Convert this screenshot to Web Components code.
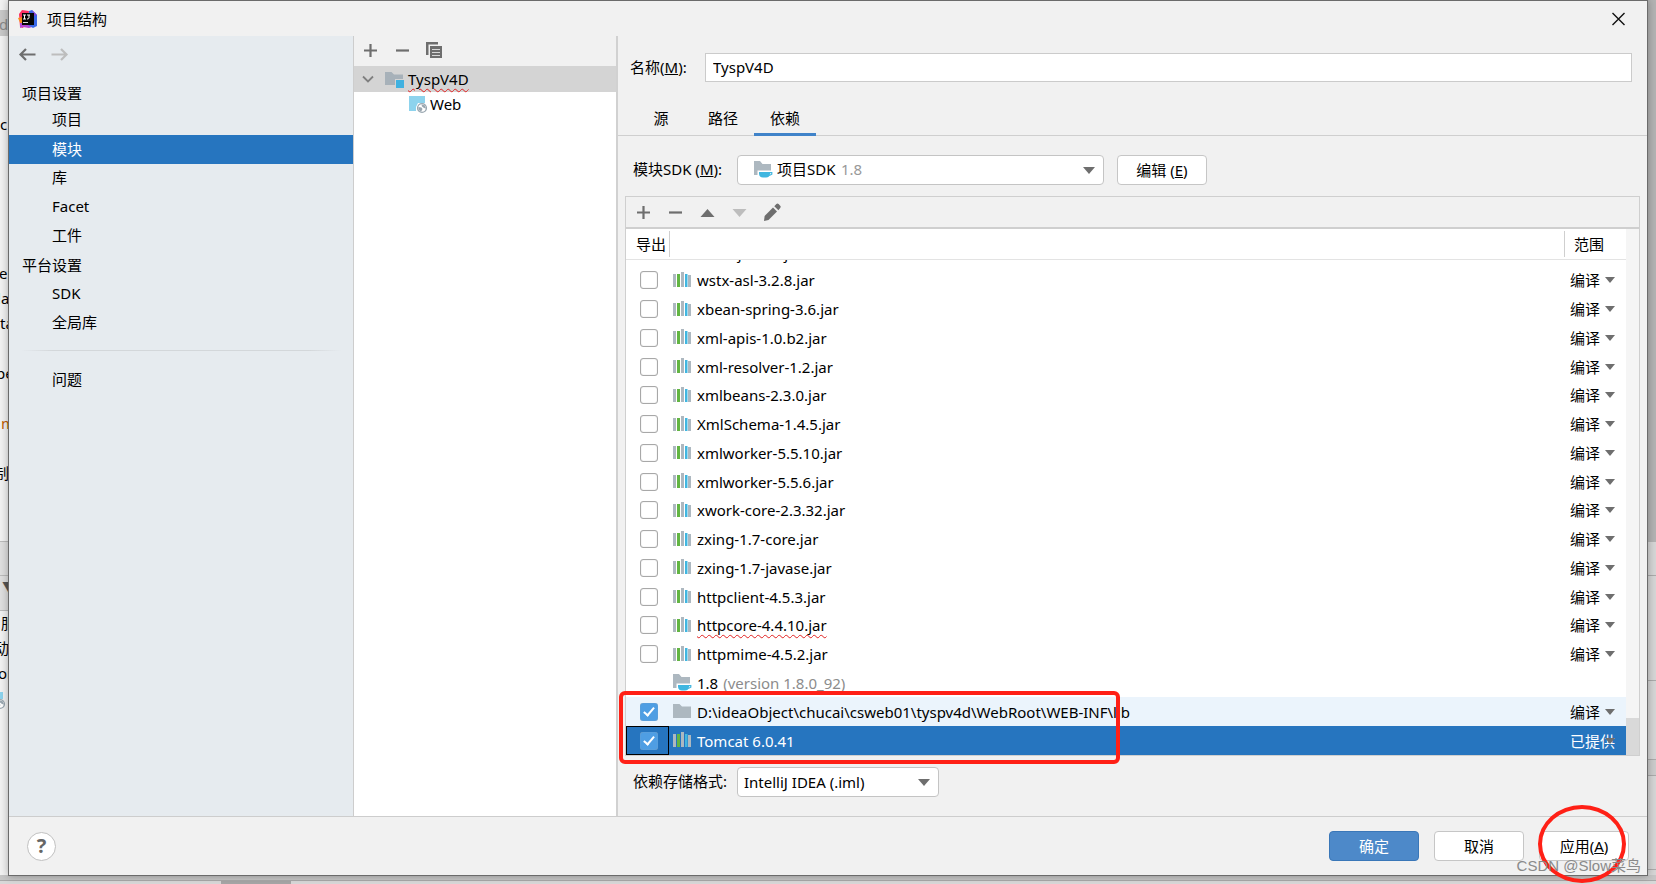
<!DOCTYPE html>
<html lang="zh-CN">
<head>
<meta charset="utf-8">
<title>项目结构</title>
<style>
html, body { height: 100%; margin: 0; }
body { font: 15px/20px "Noto Sans", "Noto Sans CJK SC", sans-serif; color: #000; background: #f1f1f1; overflow: hidden; }
</style>
</head>
<body>
<app-desktop>
  <ide-backdrop slot="back"></ide-backdrop>
  <structure-dialog></structure-dialog>
</app-desktop>

<script>
const define = (name, html, setup) => {
  const template = document.createElement('template');
  template.innerHTML = html;
  customElements.define(name, class extends HTMLElement {
    constructor() {
      super();
      this.attachShadow({ mode: 'open' }).append(template.content.cloneNode(true));
    }
    connectedCallback() { if (setup) setup(this, this.shadowRoot); }
  });
};

/* ---------- icons ---------- */
const ICONS = {
  plus: '<path d="M9.500 3v13M3 9.500h13" stroke="#6e6e6e" stroke-width="2.200" fill="none"/>',
  minus: '<path d="M3 9.500h13" stroke="#6e6e6e" stroke-width="2.200" fill="none"/>',
  copy: '<path d="M1 1h12v2.500H3.500V14H1z" fill="#6e6e6e"/><path d="M5 5h12v12H5z" fill="#6e6e6e"/><path d="M7 8.500h8M7 11.500h8M7 14.500h8" stroke="#d8d8d8"/>',
  up: '<path d="M2.500 14L9.500 6l7 8z" fill="#6e6e6e"/>',
  down: '<path d="M2.500 6h14l-7 8z" fill="#bdbdbd"/>',
  pencil: '<path d="M2 18l.6-5L11 4.500l4 4L6.500 17z" fill="#6e6e6e"/><path d="M12.300 3.200L14.400 1q1.100-1 2.200 0L18.200 2.700q1 1.100 0 2.200L16.400 7.200z" fill="#6e6e6e"/>',
  back: '<path d="M17.500 9.500H2.500M8 4L2.500 9.500 8 15" stroke="#6e6e6e" stroke-width="2.200" fill="none"/>',
  forward: '<path d="M1.500 9.500h15M11 4l5.500 5.500L11 15" stroke="#bdbdbd" stroke-width="2.200" fill="none"/>',
  chevron: '<path d="M4 6.500l5 5 5-5" stroke="#7f7f7f" stroke-width="1.800" fill="none"/>',
  close: '<path d="M3.500 4l12 12M15.500 4l-12 12" stroke="#111" stroke-width="1.400" fill="none"/>',
  folder: '<path d="M0 2h6.500l2.500 2.500h9V16H0z" fill="#adb8c0"/>',
  module: '<path d="M0 2h6.500l2.500 2.500h9V9h-8v6H0z" fill="#a7b1b9"/><path d="M11 10h8v8h-8z" fill="#3fb1e0"/>',
  sdk: '<path d="M0 1h6l2.500 3H17v6.500H3.500V15H0z" fill="#adb8c0"/><path d="M5 12h11v1.500c0 2.500-1.500 4-4 4H9c-2.500 0-4-1.500-4-4z" fill="#40b6e0"/><path d="M16 12.700h1.800v1.500l-2.600 1.300" fill="none" stroke="#40b6e0" stroke-width="1.200"/>',
  library: '<path d="M0 3h3v13H0zM8 1h3v15H8zM15 4h3v12h-3z" fill="#adb8c0"/><path d="M4 3h3v13H4z" fill="#62b543"/><path d="M12 3h2.500v13H12z" fill="#40b6e0"/>',
  web: '<path d="M0 1h16v7H9l-2 4v4H0z" fill="#8dd3ed"/><circle cx="13" cy="13" r="4.400" fill="#fff" stroke="#9aa7b0" stroke-width="1.400"/><path d="M9.500 12l3 .5 1 1.500-1.500 3-2.500-2.500zM12.500 9.500l3 .5 1.500 3.500-2-.5-2-1.500z" fill="#9aa7b0"/>',
  logo: '<path d="M1 5l3-4 7 1-1 9-5 8-3-1z" fill="#fc3164"/><path d="M0 9l4-1 5 7-6 1z" fill="#f98b1c"/><path d="M2 14h8l4 4-3 1-6-1-3 1z" fill="#b445d4"/><path d="M11 2l3-1 5 5v11l-4 2-5-3z" fill="#3a69e8"/><path d="M14 1l5 5-3 1z" fill="#8345d8"/><path d="M4 4h12v12H4z" fill="#050505"/><path d="M5 6h3M6.500 6v4M5 10h3M9 6h3M11 6v3q0 1-2 1" stroke="#fff" fill="none"/><path d="M5 13.500h5" stroke="#ddd"/>'
};
define('ui-icon', `<style>
  :host { display: inline-flex; width: 19px; height: 19px; flex: none; }
  svg { display: block; width: 19px; height: 19px; }
</style><svg viewBox="0 0 19 19" aria-hidden="true"></svg>`, (host, root) => {
  root.querySelector('svg').innerHTML = ICONS[host.getAttribute('name')];
});

define('tool-button', `<style>
  :host { display: block; }
  button { display: flex; align-items: center; justify-content: center; width: 32px; height: 28px; padding: 0; border: 0; background: none; }
</style><button type="button"></button>`, (host, root) => {
  const button = root.querySelector('button');
  button.innerHTML = `<ui-icon name="${host.getAttribute('icon')}"></ui-icon>`;
  button.setAttribute('aria-label', host.getAttribute('label'));
  button.disabled = host.hasAttribute('disabled');
});

define('push-button', `<style>
  :host { display: block; }
  button { box-sizing: border-box; width: 100%; height: 30px; padding: 0; border: 1px solid #c6c6c6; border-radius: 4px; background: #fff; color: #000; font: inherit; }
  :host([primary]) button { background: #4d89c9; border-color: #3a77b8; color: #fff; }
</style><button type="button"><slot></slot></button>`);

/* ---------- desktop ---------- */
define('app-desktop', `<style>
  :host { display: grid; height: 100%; grid-template: minmax(0, 1fr) / minmax(0, 1fr); position: relative; }
  ::slotted(*) { grid-area: 1 / 1; }
  .mark { position: absolute; z-index: 2; right: 15px; bottom: 8px; font: 15px/20px "Liberation Sans", "Noto Sans CJK SC", sans-serif; color: #8a8a8a; pointer-events: none; }
</style><slot name="back"></slot><slot></slot><div class="mark">CSDN @Slow菜鸟</div>`);

define('ide-backdrop', `<style>
  :host { display: flex; flex-direction: column; background: #d6d6d6; overflow: hidden; }
  .main { flex: 1; display: flex; justify-content: space-between; min-height: 0; }
  .left { width: 24px; background: #f2f2f2; overflow: hidden; white-space: nowrap; position: relative; }
  .left span { position: absolute; }
  .left i { position: absolute; left: 0; right: 0; height: 1px; background: #bbb; }
  .band { position: absolute; left: 0; right: 0; top: 10px; height: 26px; background: #c8c8c8; }
  .band.b { top: 541px; height: 69px; background: #dfdfdf; }
  .right { width: 24px; background: #d6d6d6; display: flex; flex-direction: column; }
  .right div { border-bottom: 1px solid #ababab; box-sizing: border-box; }
  .bar { height: 9px; display: flex; flex-direction: column; background: #d8d8d8; }
  .bar b { height: 5px; border-bottom: 1px solid #aaa; background: #c6c6c6; }
  .bar em { height: 3px; margin-left: 221px; width: 70px; background: #a6a6a6; }
</style>
<div class="main">
  <div class="left">
    <div class="band"></div><div class="band b"></div>
    <span style="top:14px;left:-1px;color:#888">d</span>
    <span style="top:114px;left:0">c</span>
    <span style="top:263px;left:-1px">er</span>
    <span style="top:288px;left:-3px"><font color="#0a64c8">l</font>a</span>
    <span style="top:313px;left:0">ta</span>
    <span style="top:363px;left:-4px">pe</span>
    <span style="top:413px;left:1px;color:#c06000">m</span>
    <span style="top:463px;left:-6px">制</span>
    <i style="top:541px"></i><i style="top:575px"></i><i style="top:610px"></i>
    <span style="top:577px;left:2px;color:#555">▼</span>
    <span style="top:613px;left:1px">服</span>
    <span style="top:638px;left:-6px">动</span>
    <span style="top:663px;left:-2px">on</span>
    <span style="top:691px;left:-13px"><ui-icon name="web"></ui-icon></span>
  </div>
  <div class="right">
    <div style="height:542px;background:#b3b3b3;border:0"></div>
    <div style="height:34px"></div><div style="height:105px"></div><div style="height:79px"></div><div style="height:16px;background:#ccc"></div><div style="height:94px"></div>
  </div>
</div>
<div class="bar"><b></b><em></em></div>`);

/* ---------- dialog ---------- */
define('structure-dialog', `<style>
  :host { display: flex; flex-direction: column; position: relative; z-index: 1; margin: 0 8px 8px; border: 1px solid #6b6b6b; background: #f1f1f1; box-shadow: 0 0 8px rgba(0,0,0,.3); min-height: 0; }
  .body { flex: 1; min-height: 0; display: grid; grid-template-columns: 345px 264px minmax(0, 1fr); grid-template-rows: minmax(0, 1fr); }
</style>
<title-bar>项目结构</title-bar>
<div class="body"><settings-nav></settings-nav><module-tree></module-tree><module-editor></module-editor></div>
<dialog-footer></dialog-footer>`);

define('title-bar', `<style>
  :host { display: flex; align-items: center; height: 35px; padding: 0 19px 0 9px; }
  h1 { flex: 1; margin: 0 0 0 10px; font-size: 15px; font-weight: 400; }
  button { width: 19px; height: 19px; padding: 0; border: 0; background: none; }
</style><ui-icon name="logo"></ui-icon><h1><slot></slot></h1><button type="button" aria-label="关闭"><ui-icon name="close"></ui-icon></button>`);

define('settings-nav', `<style>
  :host { display: block; background: #e6ebef; border-right: 1px solid #cdcdcd; }
  .hist { display: flex; height: 44px; padding: 4px 0 0 2px; box-sizing: border-box; }
  nav { display: flex; flex-direction: column; }
  h2 { margin: 0; font-size: 15px; font-weight: 400; height: 29px; line-height: 28px; padding-left: 13px; }
  h2:first-child { height: 26px; line-height: 26px; }
  a { height: 29px; line-height: 27px; padding-left: 43px; color: #000; text-decoration: none; }
  a.on { background: #2675bf; color: #fff; line-height: 29px; }
  hr { width: 320px; height: 1px; margin: 12px auto 15px; border: 0; background: linear-gradient(90deg, transparent, #d3d7da 10%, #d3d7da 90%, transparent); }
</style>
<div class="hist"><tool-button icon="back" label="后退"></tool-button><tool-button icon="forward" label="前进" disabled></tool-button></div>
<nav>
  <h2>项目设置</h2>
  <a href="#project">项目</a><a href="#modules" class="on" aria-current="page">模块</a><a href="#libs">库</a><a href="#facets">Facet</a><a href="#artifacts">工件</a>
  <h2>平台设置</h2>
  <a href="#sdks">SDK</a><a href="#global">全局库</a>
  <hr>
  <a href="#problems">问题</a>
</nav>`);

define('module-tree', `<style>
  :host { display: block; background: #fff; border-right: 2px solid #d1d1d1; }
  .tools { display: flex; height: 30px; background: #f1f1f1; }
  .row { display: flex; align-items: center; gap: 4px; height: 26px; padding-left: 5px; }
  .row.on { background: #d4d4d4; }
  .row.child { height: 24px; padding-left: 55px; gap: 2px; }
  .bad { text-decoration: underline wavy #e02020 1px; text-underline-offset: 3px; }
  .on ui-icon + ui-icon { margin-left: 3px; }
</style>
<div class="tools"><tool-button icon="plus" label="添加"></tool-button><tool-button icon="minus" label="移除"></tool-button><tool-button icon="copy" label="复制"></tool-button></div>
<div role="tree">
  <div class="row on" role="treeitem" aria-selected="true"><ui-icon name="chevron"></ui-icon><ui-icon name="module"></ui-icon><span class="bad">TyspV4D</span></div>
  <div class="row child" role="treeitem"><ui-icon name="web"></ui-icon><span>Web</span></div>
</div>`);

/* drop-down with a label, an optional icon and a dimmed note behind the value */
define('combo-field', `<style>
  :host { display: flex; align-items: center; }
  label { width: 104px; flex: none; padding-bottom: 2px; }
  .box { position: relative; width: var(--w); height: 30px; }
  select { appearance: none; box-sizing: border-box; width: 100%; height: 30px; padding: 0 30px var(--lift, 0) var(--pad, 6px); border: 1px solid #c4c4c4; border-radius: 4px; background: #fff; color: #000; font: inherit; }
  .box::after { content: ""; position: absolute; right: 9px; top: 12px; border: 6px solid transparent; border-top: 7px solid #6e6e6e; border-bottom: 0; pointer-events: none; }
  .extra { position: absolute; left: 17px; top: 4px; display: flex; align-items: center; pointer-events: none; color: #999; }
</style><label for="s"><slot name="label"></slot></label><div class="box"><select id="s"><option></option></select><span class="extra"><slot></slot></span></div>`, (host, root) => {
  root.querySelector('option').textContent = host.getAttribute('value');
});

define('module-editor', `<style>
  :host { display: flex; flex-direction: column; min-width: 0; min-height: 0; }
  .name { display: flex; align-items: center; margin: 17px 15px 0 12px; }
  .name label { width: 75px; padding-bottom: 2px; }
  input { flex: 1; box-sizing: border-box; height: 29px; padding: 0 7px 2px; border: 1px solid #cbcbcb; background: #fff; font: inherit; color: #000; }
  .tabs { display: flex; align-items: flex-end; height: 53px; padding-left: 12px; border-bottom: 1px solid #cfcfcf; }
  .tabs button { width: 62px; height: 34px; margin-bottom: -1px; padding: 1px 0 0; border: 0; border-bottom: 3px solid transparent; background: none; font: inherit; color: #000; }
  .tabs button.on { border-color: #4083c9; }
  .sdk { display: flex; gap: 13px; margin: 19px 0 11px 15px; }
  .sdk combo-field { --w: 367px; --pad: 39px; --lift: 2px; }
  .sdk push-button { width: 90px; }
  .note { margin-left: 68px; }
  dependency-panel { flex: 1; min-height: 0; margin: 0 7px 0 7px; }
  .format { --w: 202px; margin: 11px 0 19px 15px; }
</style>
<div class="name"><label for="n">名称(<u>M</u>):</label><input id="n" value="TyspV4D"></div>
<div class="tabs" role="tablist"><button type="button" role="tab">源</button><button type="button" role="tab">路径</button><button type="button" role="tab" class="on" aria-selected="true">依赖</button></div>
<div class="sdk">
  <combo-field value="项目SDK"><span slot="label">模块SDK (<u>M</u>):</span><ui-icon name="sdk"></ui-icon><span class="note">1.8</span></combo-field>
  <push-button>编辑 (<u>E</u>)</push-button>
</div>
<dependency-panel></dependency-panel>
<combo-field class="format" value="IntelliJ IDEA (.iml)"><span slot="label">依赖存储格式:</span></combo-field>`);

const JARS = ['wstx-asl-3.2.8.jar', 'xbean-spring-3.6.jar', 'xml-apis-1.0.b2.jar', 'xml-resolver-1.2.jar', 'xmlbeans-2.3.0.jar', 'XmlSchema-1.4.5.jar', 'xmlworker-5.5.10.jar', 'xmlworker-5.5.6.jar', 'xwork-core-2.3.32.jar', 'zxing-1.7-core.jar', 'zxing-1.7-javase.jar', 'httpclient-4.5.3.jar', 'httpcore-4.4.10.jar', 'httpmime-4.5.2.jar'];
const ROWS = [
  ...JARS.map(name => ({ name, icon: 'library', scope: '编译', bad: name.startsWith('httpcore') })),
  { name: '1.8', note: '(version 1.8.0_92)', icon: 'sdk' },
  { name: 'D:\\ideaObject\\chucai\\csweb01\\tyspv4d\\WebRoot\\WEB-INF\\lib', icon: 'folder', scope: '编译', checked: true, cls: 'hover' },
  { name: 'Tomcat 6.0.41', icon: 'library', scope: '已提供', checked: true, cls: 'on' }
];
const rowHtml = (r, i) => `<tr class="${r.cls || ''}">
  <td class="c">${r.scope ? `<input type="checkbox" aria-labelledby="r${i}" ${r.checked ? 'checked' : ''}>` : ''}</td>
  <td><div class="lib"><ui-icon name="${r.icon}"></ui-icon><span id="r${i}" class="${r.bad ? 'bad' : ''}">${r.name}</span>${r.note ? `<span class="note">${r.note}</span>` : ''}</div></td>
  <td>${r.scope ? `<div class="scope"><select aria-label="范围"><option>${r.scope}</option></select></div>` : ''}</td></tr>`;

define('dependency-panel', `<style>
  :host { display: flex; flex-direction: column; position: relative; border: 1px solid #cfcfcf; }
  .tools { display: flex; align-items: center; height: 30px; padding-left: 1px; border-bottom: 2px solid #cfcfcf; }
  .view { flex: 1; min-height: 0; display: flex; }
  .list { flex: 1; min-width: 0; background: #fff; }
  table { width: 100%; height: 100%; border-collapse: separate; border-spacing: 0; table-layout: fixed; }
  th, td { padding: 0; text-align: left; font-weight: 400; }
  th { height: 30px; border-bottom: 1px solid #e3e3e3; }
  th div { height: 26px; line-height: 26px; padding-left: 9px; border-left: 1px solid #cfcfcf; }
  th:first-child div { border: 0; padding-left: 10px; }
  .peek td { height: 6px; }
  .peek div { height: 6px; display: flex; align-items: flex-end; overflow: hidden; padding: 0 0 0 28px; line-height: 26px; }
  .c input { appearance: none; display: block; box-sizing: border-box; width: 18px; height: 18px; margin: 0 0 0 14px; border: 1px solid #a8a8a8; border-radius: 3px; background: #fff; box-shadow: inset 0 0 1px #a8a8a8; }
  .c input:checked { border: 0; background: #4f9ee3; }
  .c input:checked::after { content: ""; display: block; width: 4px; height: 9px; margin: 2px 0 0 6px; border: solid #fff; border-width: 0 2px 2px 0; transform: rotate(40deg); }
  .lib { display: flex; align-items: center; gap: 5px; height: 26px; padding-left: 4px; white-space: pre; }
  .bad { text-decoration: underline wavy #e02020 1px; text-underline-offset: 3px; }
  .note { color: #8c8c8c; }
  .scope { position: relative; width: 50px; margin-left: 6px; }
  .scope select { appearance: none; display: block; width: 50px; height: 20px; padding: 0; border: 0; background: none; font: inherit; color: inherit; }
  .scope::after { content: ""; position: absolute; right: 5px; top: 7px; border: 5px solid transparent; border-top: 6px solid #6e6e6e; border-bottom: 0; pointer-events: none; }
  .hover { background: #ebf4fc; }
  .on { background: #2675bf; color: #fff; }
  .on .c { outline: 1px solid #000; outline-offset: -1px; }
  .track { width: 13px; display: flex; flex-direction: column; justify-content: flex-end; background: #f5f5f5; }
  .track div { height: 37px; background: #d9d9d9; }
  .frame { position: absolute; left: -7px; bottom: -9px; width: 501px; height: 73px; box-sizing: border-box; border: 4px solid #ff2016; border-radius: 6px; pointer-events: none; }
</style>
<div class="tools"><tool-button icon="plus" label="添加"></tool-button><tool-button icon="minus" label="移除"></tool-button><tool-button icon="up" label="上移"></tool-button><tool-button icon="down" label="下移" disabled></tool-button><tool-button icon="pencil" label="编辑"></tool-button></div>
<div class="view">
  <div class="list"><table>
    <colgroup><col style="width:43px"><col><col style="width:62px"></colgroup>
    <thead><tr><th><div>导出</div></th><th><div></div></th><th><div>范围</div></th></tr></thead>
    <tbody><tr class="peek"><td></td><td><div>wsdl4j-1.6.3.jar</div></td><td></td></tr>${ROWS.map(rowHtml).join('')}</tbody>
  </table></div>
  <div class="track"><div></div></div>
</div>
<div class="frame"></div>`);

define('dialog-footer', `<style>
  :host { display: flex; align-items: center; gap: 15px; height: 58px; padding: 0 18px; border-top: 1px solid #cdcdcd; }
  .help { width: 29px; height: 29px; margin-right: auto; padding: 0; border: 1px solid #c0c0c0; border-radius: 50%; background: #fff; color: #666; font: 700 20px/26px "Noto Sans", sans-serif; }
  push-button { width: 90px; }
  .apply { position: relative; }
  .ring { position: absolute; left: -1px; top: -26px; width: 88px; height: 78px; box-sizing: border-box; border: 4px solid #ff2016; border-radius: 50%; pointer-events: none; }
</style>
<button class="help" type="button" aria-label="帮助">?</button>
<push-button primary>确定</push-button>
<push-button>取消</push-button>
<div class="apply"><push-button>应用(<u>A</u>)</push-button><div class="ring"></div></div>`);
</script>
</body>
</html>
